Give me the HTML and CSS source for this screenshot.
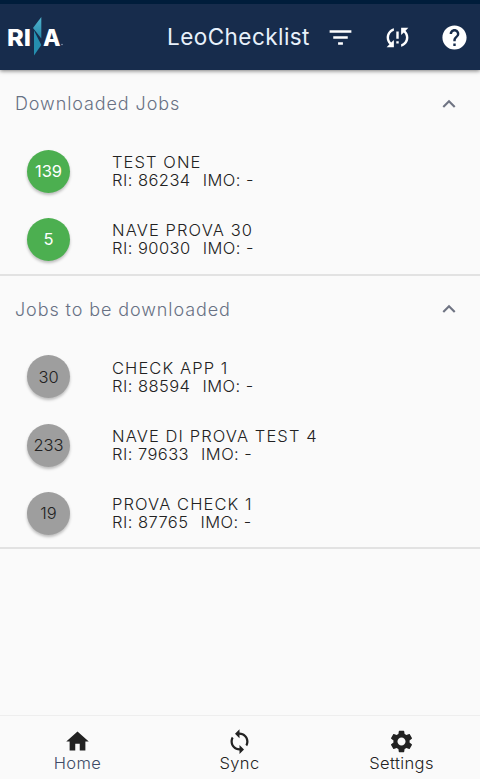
FILE: index.html
```html
<!DOCTYPE html>
<html lang="en">
<head>
  <meta charset="UTF-8" />
  <meta name="viewport" content="width=device-width, initial-scale=1" />
  <title>LeoChecklist</title>
  <link rel="stylesheet" href="styles.css">
</head>
<body>

  <!-- Top bar -->
  <header class="app-bar">
    <svg class="logo" viewBox="0 0 58 40" role="img" aria-label="RINA">
      <defs>
        <linearGradient id="logoBlue" x1="0" y1="0" x2="0" y2="1">
          <stop offset="0" stop-color="#52b5cf" />
          <stop offset="1" stop-color="#2488a8" />
        </linearGradient>
      </defs>
      <text class="logo-text" x="-1" y="28.500" textLength="24" lengthAdjust="spacingAndGlyphs">RI</text>
      <path fill="url(#logoBlue)" d="M33.300 0v21.500L25 11z" />
      <path fill="#258eaf" d="M26 13.500l7.300 14.500-7.300 10.500z" />
      <text class="logo-text" x="35" y="28.500" textLength="17.500" lengthAdjust="spacingAndGlyphs">A</text>
      <circle cx="54" cy="27.500" r=".7" fill="#9eb0c4" />
    </svg>
    <h1 class="app-title">LeoChecklist</h1>
    <div class="actions">
      <svg class="icon" viewBox="0 0 24 24"><path d="M10 18h4v-2h-4v2zM3 6v2h18V6H3zm3 7h12v-2H6v2z" /></svg>
      <svg class="icon" viewBox="0 0 24 24"><path d="M3 12c0 2.210.91 4.200 2.360 5.640L3 20h6v-6l-2.240 2.240C5.680 15.150 5 13.660 5 12c0-2.610 1.670-4.830 4-5.650V4.260C5.550 5.150 3 8.270 3 12zm8 5h2v-2h-2v2zM21 4h-6v6l2.240-2.240C18.320 8.850 19 10.340 19 12c0 2.610-1.670 4.830-4 5.650v2.090c3.450-.89 6-4.010 6-7.740 0-2.210-.91-4.200-2.360-5.640L21 4zm-10 9h2V7h-2v6z" /></svg>
      <svg class="icon" viewBox="0 0 24 24"><path d="M12 2C6.480 2 2 6.480 2 12s4.480 10 10 10 10-4.480 10-10S17.520 2 12 2zm1 17h-2v-2h2v2zm2.070-7.750l-.9.920C13.450 12.900 13 13.500 13 15h-2v-.5c0-1.100.45-2.100 1.170-2.830l1.240-1.260c.37-.36.59-.86.59-1.410 0-1.100-.9-2-2-2s-2 .9-2 2H8c0-2.210 1.790-4 4-4s4 1.790 4 4c0 .88-.36 1.680-.93 2.250z" /></svg>
    </div>
  </header>

  <main class="content">
    <!-- Downloaded -->
    <section class="panel">
      <div class="panel-header">
        <h2 class="panel-title">Downloaded Jobs</h2>
        <svg class="chevron" viewBox="0 0 24 24"><path d="M12 8l-6 6 1.410 1.410L12 10.830l4.590 4.580L18 14z" /></svg>
      </div>
      <div class="job">
        <span class="badge green">139</span>
        <div class="job-text">
          <div class="job-name">TEST ONE</div>
          <div class="job-info"><span>RI: 86234</span><span>IMO: -</span></div>
        </div>
      </div>
      <div class="job">
        <span class="badge green">5</span>
        <div class="job-text">
          <div class="job-name">NAVE PROVA 30</div>
          <div class="job-info"><span>RI: 90030</span><span>IMO: -</span></div>
        </div>
      </div>
    </section>

    <!-- To be downloaded -->
    <section class="panel">
      <div class="panel-header">
        <h2 class="panel-title">Jobs to be downloaded</h2>
        <svg class="chevron" viewBox="0 0 24 24"><path d="M12 8l-6 6 1.410 1.410L12 10.830l4.590 4.580L18 14z" /></svg>
      </div>
      <div class="job">
        <span class="badge">30</span>
        <div class="job-text">
          <div class="job-name">CHECK APP 1</div>
          <div class="job-info"><span>RI: 88594</span><span>IMO: -</span></div>
        </div>
      </div>
      <div class="job">
        <span class="badge">233</span>
        <div class="job-text">
          <div class="job-name">NAVE DI PROVA TEST 4</div>
          <div class="job-info"><span>RI: 79633</span><span>IMO: -</span></div>
        </div>
      </div>
      <div class="job">
        <span class="badge">19</span>
        <div class="job-text">
          <div class="job-name">PROVA CHECK 1</div>
          <div class="job-info"><span>RI: 87765</span><span>IMO: -</span></div>
        </div>
      </div>
    </section>
  </main>

  <!-- Bottom navigation -->
  <nav class="bottom-nav">
    <a class="nav-item active">
      <svg class="nav-icon" viewBox="0 0 24 24"><path d="M10 20v-6h4v6h5v-8h3L12 3 2 12h3v8z" /></svg>
      <span>Home</span>
    </a>
    <a class="nav-item">
      <svg class="nav-icon" viewBox="0 0 24 24"><path d="M12 4V1L8 5l4 4V6c3.310 0 6 2.690 6 6 0 1.010-.25 1.970-.7 2.800l1.460 1.460C19.540 15.030 20 13.570 20 12c0-4.420-3.580-8-8-8zm0 14c-3.310 0-6-2.690-6-6 0-1.010.25-1.970.7-2.800L5.240 7.740C4.460 8.970 4 10.430 4 12c0 4.420 3.580 8 8 8v3l4-4-4-4v3z" /></svg>
      <span>Sync</span>
    </a>
    <a class="nav-item">
      <svg class="nav-icon gear" viewBox="0 0 24 24"><path d="M19.140 12.940c.04-.3.06-.61.06-.94s-.02-.64-.07-.94l2.030-1.580c.18-.14.23-.41.12-.61l-1.920-3.320c-.12-.22-.37-.29-.59-.22l-2.390.96c-.5-.38-1.030-.7-1.620-.94L14.400 2.810c-.04-.24-.24-.41-.48-.41h-3.840c-.24 0-.43.17-.47.41l-.36 2.540c-.59.24-1.130.57-1.620.94l-2.390-.96c-.22-.08-.47 0-.59.22L2.740 8.870c-.12.21-.08.47.12.61l2.030 1.580c-.05.3-.09.63-.09.94s.02.64.07.94l-2.030 1.580c-.18.14-.23.41-.12.61l1.920 3.320c.12.22.37.29.59.22l2.390-.96c.5.38 1.030.7 1.620.94l.36 2.540c.05.24.24.41.48.41h3.840c.24 0 .44-.17.47-.41l.36-2.540c.59-.24 1.130-.56 1.620-.94l2.390.96c.22.08.47 0 .59-.22l1.920-3.320c.12-.22.07-.47-.12-.61l-2.010-1.580zM12 15.600c-1.980 0-3.600-1.620-3.600-3.600s1.620-3.600 3.600-3.600 3.600 1.620 3.600 3.600-1.620 3.600-3.600 3.600z" /></svg>
      <span>Settings</span>
    </a>
  </nav>

</body>
</html>
```

FILE: styles.css
```css
* {
  box-sizing: border-box;
}

body {
  margin: 0;
  height: 100vh;
  display: flex;
  flex-direction: column;
  font-family: Inter, "Open Sans", sans-serif;
  font-weight: 300;
  background: #fafafa;
  color: #222;
  overflow: hidden;
}

/* Top bar */
.app-bar {
  display: flex;
  align-items: center;
  flex: none;
  height: 70px;
  padding: 0 11px 0 8px;
  background: #172c4c;
  border-top: 4px solid #001d3b;
  box-shadow: 0 1px 4px rgba(0, 0, 0, 0.5);
}

.logo {
  width: 58px;
  height: 40px;
  margin-top: -1px;
  overflow: visible;
}

.logo-text {
  font-size: 23.5px;
  font-weight: 800;
  fill: #fff;
}

.app-title {
  margin: -1px 0 0 101px;
  font-size: 22.5px;
  font-weight: 400;
  line-height: 28px;
  letter-spacing: 0.45px;
  color: #e8f1fb;
}

.actions {
  display: flex;
  gap: 28px;
  margin-left: auto;
}

.icon {
  width: 29px;
  height: 29px;
  fill: #fff;
}

/* Job lists */
.content {
  flex: 1;
}

.panel {
  border-bottom: 2px solid #e2e2e2;
}

.panel-header {
  display: flex;
  align-items: center;
  justify-content: space-between;
  height: 67px;
  padding: 0 18px 0 15px;
}

.panel-title {
  margin: 0;
  font-size: 18px;
  font-weight: 300;
  letter-spacing: 0.9px;
  color: #687184;
}

.chevron {
  width: 26px;
  height: 26px;
  fill: #6f7483;
}

.job {
  display: flex;
  align-items: center;
  height: 68.3px;
  padding-left: 27px;
}

.badge {
  display: flex;
  align-items: center;
  justify-content: center;
  width: 43px;
  height: 43px;
  margin-right: 42px;
  border-radius: 50%;
  background: #9e9e9e;
  box-shadow: 0 2px 3px rgba(0, 0, 0, 0.25);
  font-size: 16.5px;
}

.badge.green {
  background: #4caf50;
  color: #fff;
  font-weight: 400;
}

.job-text {
  font-size: 16.5px;
  line-height: 18px;
  letter-spacing: 0.45px;
}

.job-name {
  letter-spacing: 1.1px;
}

.job-info {
  display: flex;
  gap: 12px;
}

/* Bottom navigation */
.bottom-nav {
  display: flex;
  justify-content: space-between;
  flex: none;
  height: 64px;
  padding: 12px 1px 0 0;
  border-top: 1px solid #eee;
}

.nav-item {
  display: flex;
  flex-direction: column;
  align-items: center;
  width: 155px;
  font-size: 16.5px;
  line-height: 20px;
  letter-spacing: 0.4px;
}

.nav-item.active {
  color: #3d4a66;
}

.nav-icon {
  width: 27px;
  height: 27px;
  margin-bottom: -2px;
  fill: #222;
}
```
